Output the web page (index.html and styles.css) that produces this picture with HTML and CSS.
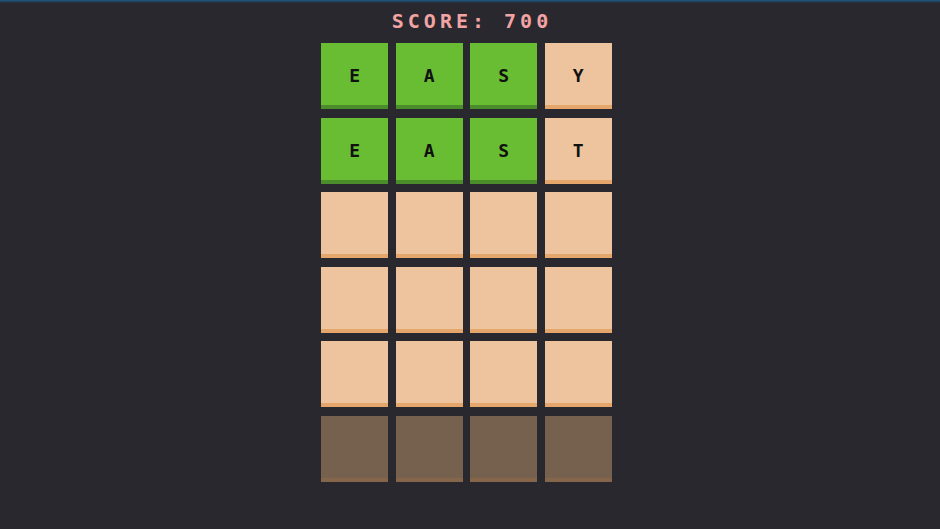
FILE: index.html
```
<!DOCTYPE html>
<html lang="en">
<head>
  <meta charset="UTF-8" />
  <title>Word Grid</title>
  <link rel="stylesheet" href="styles.css">
</head>
<body>
  <div class="topline"></div>
  <h1 class="score">SCORE: 700</h1>

  <div class="board-wrap">
    <div class="board">
      <div class="tile hit">E</div>
      <div class="tile hit">A</div>
      <div class="tile hit">S</div>
      <div class="tile">Y</div>

      <div class="tile hit">E</div>
      <div class="tile hit">A</div>
      <div class="tile hit">S</div>
      <div class="tile">T</div>

      <div class="tile"></div>
      <div class="tile"></div>
      <div class="tile"></div>
      <div class="tile"></div>

      <div class="tile"></div>
      <div class="tile"></div>
      <div class="tile"></div>
      <div class="tile"></div>

      <div class="tile"></div>
      <div class="tile"></div>
      <div class="tile"></div>
      <div class="tile"></div>

      <div class="tile locked"></div>
      <div class="tile locked"></div>
      <div class="tile locked"></div>
      <div class="tile locked"></div>
    </div>
  </div>
</body>
</html>
```

FILE: styles.css
```
body {
  margin: 0;
  padding: 0;
  width: 940px;
  height: 529px;
  background-color: #28282e;
  font-family: 'DejaVu Sans Mono', monospace;
  overflow: hidden;
}
.topline {
  height: 3px;
  background: linear-gradient(#1d5a86, #28282e);
}
.score {
  margin: 6px 0 0;
  height: 34px;
  text-align: center;
  color: #f2a3a3;
  font-size: 20px;
  font-weight: bold;
  letter-spacing: 4px;
  line-height: 24px;
  padding-left: 4px;
}
.board-wrap {
  display: flex;
  justify-content: center;
  padding-right: 7px;
}
.board {
  display: grid;
  grid-template-columns: repeat(4, 67px);
  grid-auto-rows: 66px;
  column-gap: 7.5px;
  row-gap: 8.5px;
}
.tile {
  display: flex;
  align-items: center;
  justify-content: center;
  padding-top: 3px;
  box-sizing: border-box;
  background-color: #eec49e;
  border-bottom: 4px solid #e5a66c;
  color: #111;
  font-size: 18px;
  font-weight: bold;
}
.tile.hit {
  background-color: #68bd32;
  border-bottom-color: #4a8d2a;
}
.tile.locked {
  background-color: #76614f;
  border-bottom-color: #85664a;
}
```
